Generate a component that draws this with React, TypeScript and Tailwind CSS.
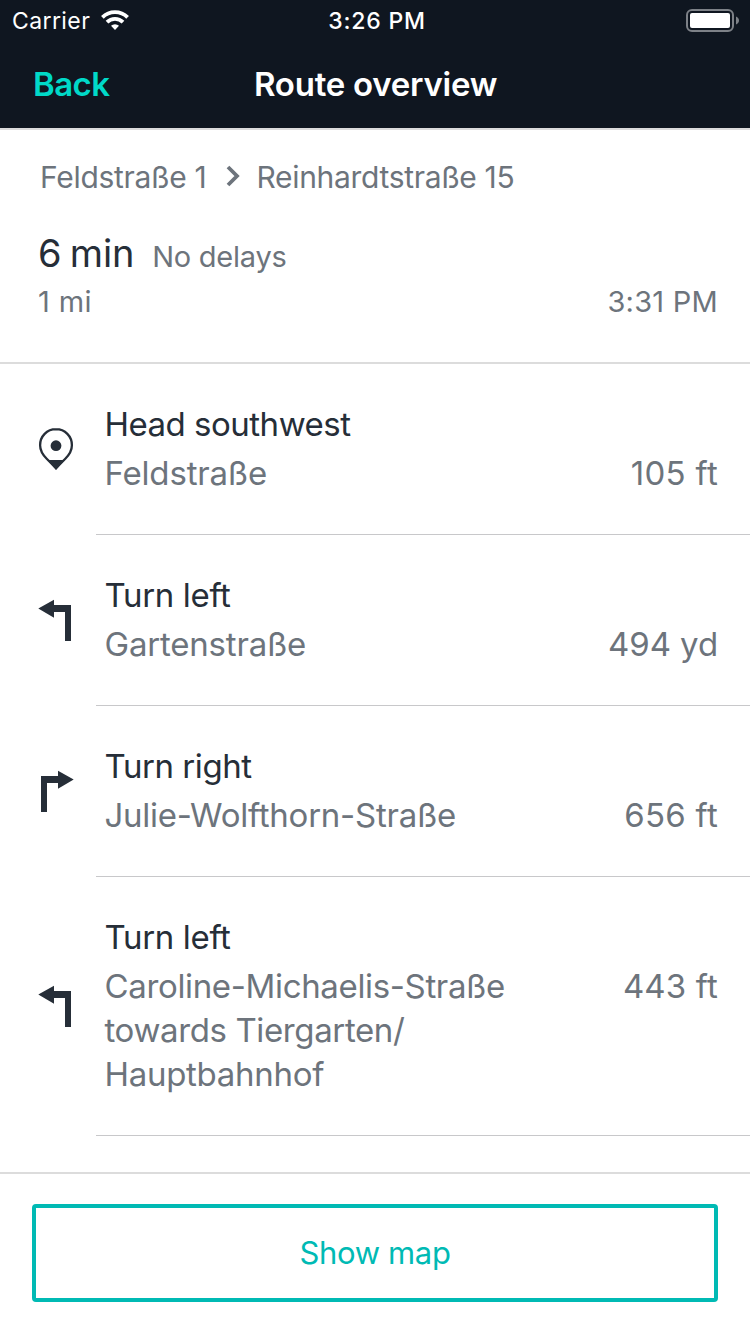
type IconKind = 'pin' | 'left' | 'right';

interface Line {
  text: string;
  tracking: string;
}

interface Step {
  icon: IconKind;
  title: Line;
  street: Line[];
  distance: Line;
}

const steps: Step[] = [
  {
    icon: 'pin',
    title: { text: 'Head southwest', tracking: 'tracking-[-0.5px]' },
    street: [{ text: 'Feldstraße', tracking: 'tracking-[-0.18px]' }],
    distance: { text: '105 ft', tracking: 'tracking-[0.3px]' },
  },
  {
    icon: 'left',
    title: { text: 'Turn left', tracking: 'tracking-[-0.35px]' },
    street: [{ text: 'Gartenstraße', tracking: 'tracking-[-0.2px]' }],
    distance: { text: '494 yd', tracking: 'tracking-[-0.1px]' },
  },
  {
    icon: 'right',
    title: { text: 'Turn right', tracking: 'tracking-[-0.45px]' },
    street: [{ text: 'Julie-Wolfthorn-Straße', tracking: 'tracking-[-0.25px]' }],
    distance: { text: '656 ft', tracking: 'tracking-[0.25px]' },
  },
  {
    icon: 'left',
    title: { text: 'Turn left', tracking: 'tracking-[-0.35px]' },
    street: [
      { text: 'Caroline-Michaelis-Straße', tracking: 'tracking-[-0.35px]' },
      { text: 'towards Tiergarten/', tracking: 'tracking-[-0.38px]' },
      { text: 'Hauptbahnhof', tracking: 'tracking-[-0.3px]' },
    ],
    distance: { text: '443 ft', tracking: 'tracking-[0.15px]' },
  },
];

function StepIcon({ kind }: { kind: IconKind }) {
  return (
    <svg viewBox="0 0 36 42" className="h-[42px] w-9 shrink-0 text-[#262e38]" fill="currentColor">
      {kind === 'pin' && (
        <>
          <path
            d="M18 1.2C8.9 1.2 2.1 8.4 2.1 17.2c0 5.5 2.9 9.8 6.6 13.5L18 40l9.3-9.3c3.7-3.7 6.6-8 6.6-13.5C33.9 8.4 27.1 1.2 18 1.2Z"
            fill="none"
            stroke="currentColor"
            strokeWidth="2.3"
          />
          <path d="M9.5 32h17L18 42Z" />
          <circle cx="18" cy="17.7" r="5.4" />
        </>
      )}
      {kind === 'left' && <path d="M0.3 9.5 16 0.7V6h17v36h-6V13H16v5.7Z" />}
      {kind === 'right' && <path d="M35.7 9.6 20 0.7V6H3v36h6V13h11v5.7Z" />}
    </svg>
  );
}

function StatusBar() {
  return (
    <div className="flex h-[41px] items-center justify-between pl-3 pr-[11px] text-[23px] leading-[42px] text-white">
      <div className="flex flex-1 items-center gap-[11px]">
        <span className="tracking-[0.4px]">Carrier</span>
        <svg viewBox="0 0 28 20" className="mb-[2px] h-5 w-7" fill="none" stroke="white" strokeWidth="3.8">
          <path d="M1.4 7.300a18 18 0 0 1 25.200 0" />
          <path d="M6 12.200a11.400 11.400 0 0 1 16 0" />
          <path d="M14 20l-4-4.200a5.800 5.800 0 0 1 8 0Z" fill="white" stroke="none" />
        </svg>
      </div>
      <span className="pl-[3px] font-medium tracking-[0.8px]">3:26 PM</span>
      <div className="flex flex-1 justify-end">
        <svg viewBox="0 0 53 23" className="h-[23px] w-[53px]">
          <rect x="1" y="1" width="46" height="21" rx="5" fill="none" stroke="#7d8187" strokeWidth="2" />
          <rect x="4" y="4" width="40" height="15" rx="2" fill="white" />
          <path d="M50 7.500c4 1.500 4 6.500 0 8Z" fill="#7d8187" />
        </svg>
      </div>
    </div>
  );
}

export default function App() {
  return (
    <div className="flex h-[1334px] w-[750px] flex-col overflow-hidden bg-white font-['Inter',sans-serif] text-[#6d747c]">
      <header className="h-[130px] shrink-0 border-b-2 border-[#dcdcdc] bg-[#0f1620]">
        <StatusBar />
        <div className="flex h-[88px] items-center px-[33px] text-[33px] font-semibold">
          <button className="w-[221px] text-left tracking-[-0.6px] text-[#00d9c8]">Back</button>
          <h1 className="tracking-[-0.25px] text-white">Route overview</h1>
        </div>
      </header>

      <section className="flex h-[234px] shrink-0 flex-col border-b-2 border-[#dcdcdc] pt-[27px] pr-8 pl-[38px] text-[30px] leading-10">
        <div className="flex items-center pl-0.5">
          <span className="tracking-[-0.3px]">Feldstraße 1</span>
          <svg viewBox="0 0 14 22" className="mr-4 mb-[2px] ml-[20px] h-[22px] w-3.5" fill="none" stroke="currentColor" strokeWidth="3.8">
            <path d="M2 2l9 9-9 9" />
          </svg>
          <span className="tracking-[-0.32px]">Reinhardtstraße 15</span>
        </div>
        <div className="mt-[31px] flex items-baseline gap-[18px] leading-[50px]">
          <span className="text-[38px] tracking-[-0.2px] text-[#262e38] [word-spacing:-2px]">6 min</span>
          <span className="text-[29px] tracking-[-0.25px]">No delays</span>
        </div>
        <div className="flex justify-between text-[29px]">
          <span className="tracking-[0.4px]">1 mi</span>
          <span className="tracking-[0.25px]">3:31 PM</span>
        </div>
      </section>

      <ul className="min-h-0 flex-1 overflow-hidden text-[33px] leading-[44px]">
        {steps.map((step, i) => (
          <li key={i} className="flex items-stretch pl-[38px]">
            <div className="flex w-[58px] shrink-0 items-center pb-px">
              <StepIcon kind={step.icon} />
            </div>
            <div className="flex-1 border-b border-[#c8c8ca] pt-[38px] pr-8 pb-[39px] pl-[8.5px]">
              <div className={`text-[#262e38] ${step.title.tracking}`}>{step.title.text}</div>
              <div className="mt-[5px] flex justify-between">
                <div>
                  {step.street.map((line) => (
                    <div key={line.text} className={line.tracking}>
                      {line.text}
                    </div>
                  ))}
                </div>
                <div className={step.distance.tracking}>{step.distance.text}</div>
              </div>
            </div>
          </li>
        ))}
      </ul>

      <footer className="h-[162px] shrink-0 border-t-2 border-[#dcdcdc] px-8 pt-[30px]">
        <button className="h-[98px] w-full rounded-[4px] border-4 border-[#00bab4] pt-px text-[31px] tracking-[-0.35px] text-[#00bab4]">
          Show map
        </button>
      </footer>
    </div>
  );
}
